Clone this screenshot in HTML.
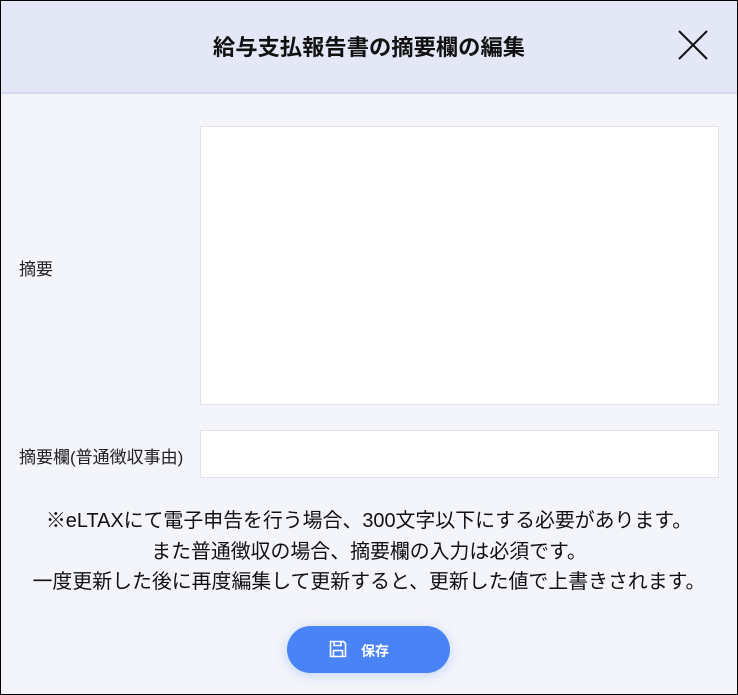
<!DOCTYPE html>
<html><head><meta charset="utf-8"><style>
*{box-sizing:border-box;margin:0;padding:0}
body{width:738px;height:695px;background:#f4f5fa;font-family:"Liberation Sans","Noto Sans CJK JP",sans-serif;position:relative;overflow:hidden}
.frame{position:absolute;inset:0;border:1px solid #000}
.hd{position:absolute;left:1px;top:1px;right:1px;height:93px;background:#e4e8f6;border-bottom:2px solid #d6daf0}
.hd h1{position:absolute;left:0;right:0;top:29px;text-align:center;font-size:22.3px;font-weight:bold;color:#111}
.x{position:absolute;left:676px;top:28px}
.lab{position:absolute;left:19px;font-size:17px;color:#222}
.box{position:absolute;left:200px;width:519px;background:#fff;border:1px solid #e0e2e8}
.note{position:absolute;left:0;right:0;top:506px;text-align:center;font-size:19.9px;line-height:30.5px;color:#111}
.btn{position:absolute;left:287px;top:626px;width:163px;height:47px;border-radius:24px;background:#4a83f5;box-shadow:0 2px 12px rgba(74,131,245,.3);color:#fff;font-size:14px;font-weight:bold}
.btn span{position:absolute;left:74px;top:15px}
.btn svg{position:absolute;left:42px;top:14px}
</style></head><body>
<div class="hd"><h1>給与支払報告書の摘要欄の編集</h1>
<svg class="x" width="32" height="32" viewBox="0 0 32 32"><path d="M2 2L30 30M30 2L2 30" stroke="#111" stroke-width="2"/></svg></div>
<div class="lab" style="top:255px">摘要</div>
<div class="box" style="top:126px;height:279px"></div>
<div class="lab" style="top:443px">摘要欄(普通徴収事由)</div>
<div class="box" style="top:430px;height:48px"></div>
<div class="note">※eLTAXにて電子申告を行う場合、300文字以下にする必要があります。<br>また普通徴収の場合、摘要欄の入力は必須です。<br>一度更新した後に再度編集して更新すると、更新した値で上書きされます。</div>
<div class="btn"><svg width="18" height="18" viewBox="0 0 18 18" fill="none" stroke="#fff" stroke-width="1.6"><path d="M1.5 1.5h13l2 2v13h-15z"/><path d="M5 1.5v4h7v-4"/><path d="M4.5 16.5v-6h9v6"/></svg><span>保存</span></div>
<div class="frame"></div>
</body></html>
